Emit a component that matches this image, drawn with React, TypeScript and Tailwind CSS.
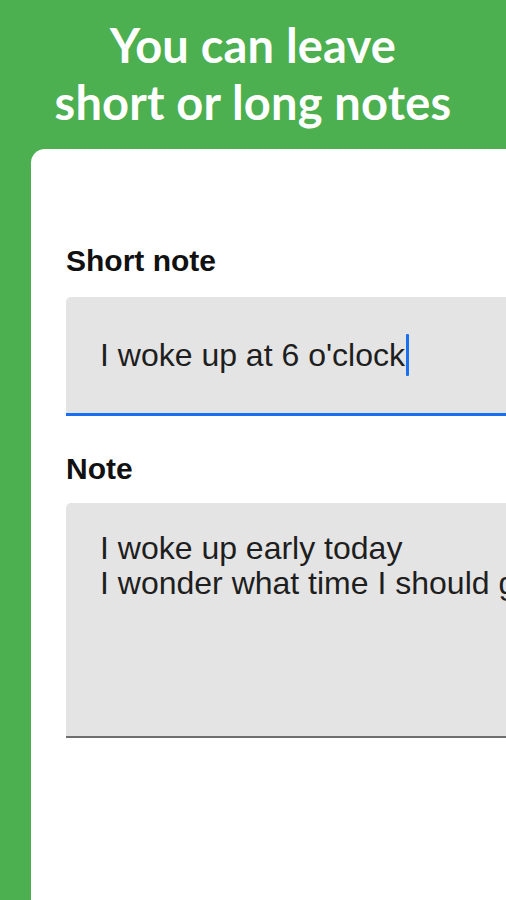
import React from "react";

export default function App() {
  return (
    <div className="w-[506px] h-[900px] bg-[#4caf50] overflow-hidden relative">
      <h1
        className="text-center text-white font-bold text-[47px] leading-[57px] pt-[17px] h-[149px] tracking-[0.2px]"
        style={{ fontFamily: "Lato, 'Open Sans', sans-serif" }}
      >
        You can leave
        <br />
        short or long notes
      </h1>
      <div
        className="ml-[31px] w-[640px] h-[760px] bg-white rounded-tl-[14px] pl-[35px] pt-[94px]"
        style={{ fontFamily: "'Liberation Sans', Arial, sans-serif" }}
      >
        <div className="text-[30px] leading-[36px] font-bold text-[#111] mb-[18px]">Short note</div>
        <div className="w-[600px] h-[119px] bg-[#e4e4e4] rounded-t-[5px] border-b-[3px] border-[#1a6ff0] pl-[34px] flex items-center">
          <span className="text-[32px] leading-[36px] text-[#1e1e1e] whitespace-nowrap">I woke up at 6 o'clock</span>
          <span className="inline-block w-[3px] h-[42px] bg-[#1a6ff0] ml-[1px] rounded-[1px]" />
        </div>
        <div className="text-[30px] leading-[36px] font-bold text-[#111] mt-[35px] mb-[16px]">Note</div>
        <div className="w-[600px] h-[235px] bg-[#e4e4e4] rounded-t-[5px] border-b-[2px] border-[#6f6f6f] pl-[34px] pt-[28px]">
          <div className="text-[32px] leading-[35px] text-[#1e1e1e] whitespace-nowrap">
            I woke up early today
            <br />
            I wonder what time I should go to bed
          </div>
        </div>
      </div>
    </div>
  );
}
